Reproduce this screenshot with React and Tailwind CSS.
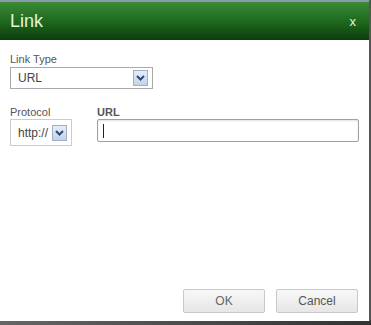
import React from "react";

function Arrow() {
  return (
    <span className="flex h-[16px] w-[15px] items-center justify-center border border-[#9fb0c8] bg-gradient-to-b from-[#e6edf7] to-[#c4d2e6]">
      <svg width="9" height="6" viewBox="0 0 9 6">
        <path d="M1 1 L4.5 4.5 L8 1" fill="none" stroke="#2b4a7a" strokeWidth="2" />
      </svg>
    </span>
  );
}

export default function App() {
  return (
    <div
      className="relative h-[325px] w-[371px] overflow-hidden bg-white"
      style={{ fontFamily: "Arial, 'Liberation Sans', sans-serif" }}
    >
      <div className="h-[2px] bg-[#8a9aa8]" />
      <div className="flex h-[38px] items-center justify-between bg-gradient-to-b from-[#3a8a36] via-[#1f6a1e] to-[#0c3d0b] pl-[10px] pr-[15px]">
        <span className="text-[18px] leading-none text-[#e4f3dc]">Link</span>
        <span className="text-[13px] leading-none text-[#e4f3dc]">x</span>
      </div>
      <div className="flex flex-col px-[10px] pt-[13px]">
        <div className="text-[11px] leading-[13px] text-[#555]">Link Type</div>
        <div className="mt-[1px] flex h-[22px] w-[143px] items-center justify-between border border-[#aaa] pl-[7px] pr-[4px]">
          <span className="text-[12px] text-[#444]">URL</span>
          <Arrow />
        </div>
        <div className="mt-[17px] flex gap-[25px]">
          <div className="flex flex-col">
            <div className="text-[11px] leading-[13px] text-[#555]">Protocol</div>
            <div className="flex h-[27px] w-[62px] items-center justify-between border border-[#ccc] pl-[7px] pr-[4px]">
              <span className="text-[12px] text-[#444]">http://</span>
              <Arrow />
            </div>
          </div>
          <div className="flex flex-1 flex-col pr-[2px]">
            <div className="text-[11px] font-bold leading-[13px] text-[#555]">URL</div>
            <div className="flex h-[23px] items-center rounded-[2px] border border-[#a0a0a0] pl-[5px] shadow-[inset_0_1px_2px_rgba(0,0,0,0.12)]">
              <span className="h-[14px] w-[1px] bg-[#222]" />
            </div>
          </div>
        </div>
      </div>
      <div className="absolute bottom-[12px] right-[13px] flex gap-[11px]">
        <button className="h-[24px] w-[82px] rounded-[2px] border border-[#c8c8c8] bg-gradient-to-b from-[#f8f8f8] to-[#e6e6e6] text-[12px] text-[#666]">OK</button>
        <button className="h-[24px] w-[82px] rounded-[2px] border border-[#c8c8c8] bg-gradient-to-b from-[#f8f8f8] to-[#e6e6e6] text-[12px] text-[#555]">Cancel</button>
      </div>
      <div className="absolute right-0 top-0 h-full w-[2px] bg-[#555]" />
      <div className="absolute bottom-0 left-0 h-[4px] w-full bg-gradient-to-r from-[#666] to-[#333]" />
    </div>
  );
}
